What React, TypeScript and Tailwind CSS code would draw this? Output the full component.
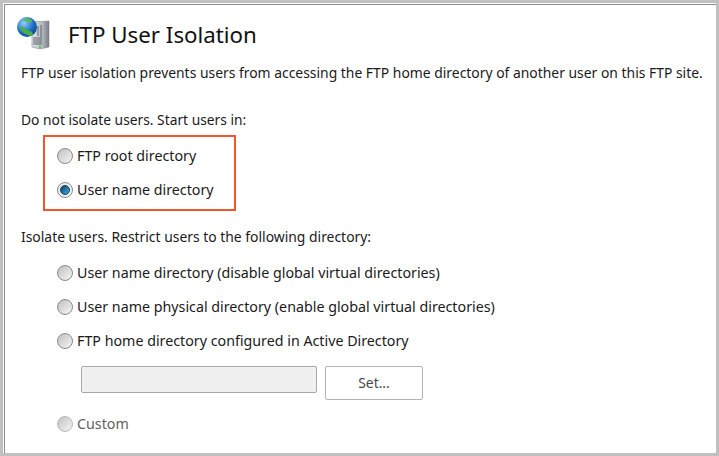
function Radio({ checked, disabled }: { checked?: boolean; disabled?: boolean }) {
  return (
    <span
      className={
        "flex h-4 w-4 shrink-0 items-center justify-center rounded-full border bg-gradient-to-br " +
        (checked ? "from-[#e8e8e8] to-[#f6f6f6] " : "from-[#c0c0c0] to-[#f6f6f6] ") +
        (disabled ? "border-[#b8b8b8]" : "border-[#8a8a8a]")
      }
    >
      {checked && (
        <span className="h-2.5 w-2.5 rounded-full border border-[#123c5c] bg-gradient-to-br from-[#0b3f66] to-[#3fb4e4]" />
      )}
    </span>
  );
}

function Option({ label, checked, disabled }: { label: string; checked?: boolean; disabled?: boolean }) {
  return (
    <div className={"flex h-5 items-center gap-1 text-[14.25px] " + (disabled ? "text-[#5f5f5f]" : "text-[#1a1a1a]")}>
      <Radio checked={checked} disabled={disabled} />
      <span>{label}</span>
    </div>
  );
}

function ServerIcon() {
  return (
    <svg width="33" height="33" viewBox="0 0 33 33" className="shrink-0">
      <defs>
        <linearGradient id="tower" x1="0" x2="1" y1="0" y2="0">
          <stop offset="0" stopColor="#e4e7ea" />
          <stop offset="0.6" stopColor="#b4babf" />
          <stop offset="1" stopColor="#767e84" />
        </linearGradient>
        <radialGradient id="globe" cx="0.35" cy="0.3" r="0.8">
          <stop offset="0" stopColor="#8fd0f5" />
          <stop offset="0.6" stopColor="#1c6fc4" />
          <stop offset="1" stopColor="#0d3f86" />
        </radialGradient>
      </defs>
      <path d="M15 5 L32 4 L32 30 L23 32 L15 30 Z" fill="url(#tower)" stroke="#7c8489" strokeWidth="0.6" />
      <path d="M16 21 H25 M16 23 H25 M16 25 H25 M16 27 H25 M21 9 V19 M24 8 V20" stroke="#5d666c" strokeWidth="1" />
      <rect x="22" y="29" width="2" height="2" fill="#58c84a" />
      <circle cx="10" cy="10" r="10" fill="url(#globe)" />
      <path d="M2 10 C6 9 9 13 13 14 C16 15 17 17 14 19 C9 18 4 15 2 10 Z" fill="#4cae4a" />
      <path d="M7 2 C10 0 15 2 15 5 C12 6 9 6 7 2 Z" fill="#5cb85c" />
    </svg>
  );
}

export default function App() {
  return (
    <div className="h-[456px] w-[719px] border-[3px] border-[#c0c0c0] bg-white pl-px pt-px font-['Noto_Sans','Open_Sans',sans-serif] text-[13.9px] text-[#1a1a1a]">
      <div className="h-full border-l border-t border-[#8c8c8c]">
        <div className="flex items-start pl-[12px] pt-[12px]">
          <ServerIcon />
          <h1 className="ml-[18px] mt-[2px] text-[22.3px] leading-[32px] text-[#111]">FTP User Isolation</h1>
        </div>

        <p className="mt-[12px] pl-[16px] leading-5">
          FTP user isolation prevents users from accessing the FTP home directory of another user on this FTP site.
        </p>

        <p className="mt-[27px] pl-[16px] text-[13.8px] leading-5">Do not isolate users. Start users in:</p>

        <div className="ml-[38px] mt-[5px] flex h-[76px] w-[193px] flex-col justify-center gap-[14px] border-2 border-[#f0572f] pl-[12px]">
          <Option label="FTP root directory" />
          <Option label="User name directory" checked />
        </div>

        <p className="mt-[16px] pl-[16px] leading-5">Isolate users. Restrict users to the following directory:</p>

        <div className="mt-4 flex flex-col gap-[14px] pl-[52px]">
          <Option label="User name directory (disable global virtual directories)" />
          <Option label="User name physical directory (enable global virtual directories)" />
          <Option label="FTP home directory configured in Active Directory" />
        </div>

        <div className="ml-[76px] mt-[15px] flex items-start gap-2">
          <div className="h-[27px] w-[236px] rounded-[2px] border border-[#a8a8a8] bg-[#f0f0f0]" />
          <button className="h-[34px] w-[98px] rounded-[2px] border border-[#b4b4b4] bg-white text-[#4a4a4a]">Set...</button>
        </div>

        <div className="mt-[14px] pl-[52px]">
          <Option label="Custom" disabled />
        </div>
      </div>
    </div>
  );
}
